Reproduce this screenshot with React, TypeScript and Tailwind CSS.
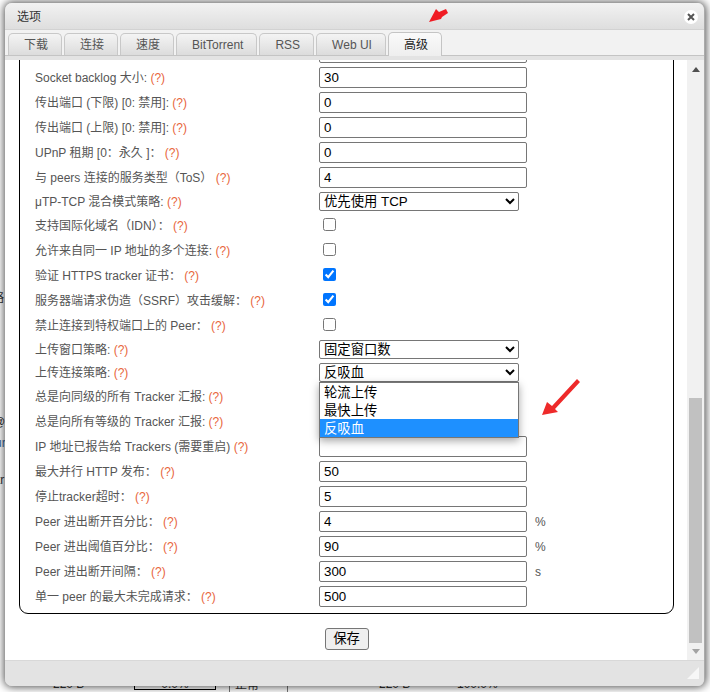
import React from "react";

const font = { fontFamily: '"Liberation Sans", "Noto Sans CJK SC", sans-serif' };

const tabs = ["下载", "连接", "速度", "BitTorrent", "RSS", "Web UI", "高级"];

type Row = {
  label: string;
  kind: "input" | "select" | "check" | "open";
  value?: string;
  unit?: string;
  checked?: boolean;
  options?: string[];
};

const rows: Row[] = [
  { label: "", kind: "input", value: "" },
  { label: "Socket backlog 大小:", kind: "input", value: "30" },
  { label: "传出端口 (下限) [0: 禁用]:", kind: "input", value: "0" },
  { label: "传出端口 (上限) [0: 禁用]:", kind: "input", value: "0" },
  { label: "UPnP 租期 [0：永久 ]：", kind: "input", value: "0" },
  { label: "与 peers 连接的服务类型（ToS）", kind: "input", value: "4" },
  { label: "μTP-TCP 混合模式策略:", kind: "select", options: ["优先使用 TCP"] },
  { label: "支持国际化域名（IDN）：", kind: "check" },
  { label: "允许来自同一 IP 地址的多个连接:", kind: "check" },
  { label: "验证 HTTPS tracker 证书：", kind: "check", checked: true },
  { label: "服务器端请求伪造（SSRF）攻击缓解：", kind: "check", checked: true },
  { label: "禁止连接到特权端口上的 Peer：", kind: "check" },
  { label: "上传窗口策略:", kind: "select", options: ["固定窗口数"] },
  { label: "上传连接策略:", kind: "open", options: ["反吸血"] },
  { label: "总是向同级的所有 Tracker 汇报:", kind: "check" },
  { label: "总是向所有等级的 Tracker 汇报:", kind: "check" },
  { label: "IP 地址已报告给 Trackers (需要重启)", kind: "input", value: "" },
  { label: "最大并行 HTTP 发布：", kind: "input", value: "50" },
  { label: "停止tracker超时：", kind: "input", value: "5" },
  { label: "Peer 进出断开百分比：", kind: "input", value: "4", unit: "%" },
  { label: "Peer 进出阈值百分比：", kind: "input", value: "90", unit: "%" },
  { label: "Peer 进出断开间隔：", kind: "input", value: "300", unit: "s" },
  { label: "单一 peer 的最大未完成请求：", kind: "input", value: "500" },
];

function Field({ row }: { row: Row }) {
  if (row.kind === "check") {
    return <input type="checkbox" defaultChecked={row.checked} className="mb-[2px] ml-[4px] h-[13px] w-[13px]" />;
  }
  if (row.kind === "input") {
    return (
      <>
        <input
          readOnly
          value={row.value}
          className="h-[21px] w-[208px] rounded-[2px] border border-[#767676] bg-white px-[4px] text-[13.33px] text-black"
        />
        {row.unit && <span className="ml-2 text-xs text-[#555]">{row.unit}</span>}
      </>
    );
  }
  return (
    <div className="relative">
      <select className="h-[19px] w-[200px] rounded-[2px] border border-[#767676] bg-white text-[13.33px] text-black">
        {row.options?.map((o) => (
          <option key={o}>{o}</option>
        ))}
      </select>
      {row.kind === "open" && (
        <div className="absolute left-0 top-[19px] z-10 w-[200px] border border-[#767676] bg-white text-[13.33px] text-black shadow-[0_3px_8px_rgba(0,0,0,0.35)]">
          <div className="h-[18px] pl-1 leading-[20px]">轮流上传</div>
          <div className="h-[18px] pl-1 leading-[20px]">最快上传</div>
          <div className="h-[18px] bg-[#1e90ff] pl-1 leading-[20px] text-white">反吸血</div>
        </div>
      )}
    </div>
  );
}

export default function App() {
  return (
    <div style={font} className="relative h-[692px] w-[710px] overflow-hidden bg-white pl-[5px] pt-[3px]">
      {/* page behind the dialog */}
      <div className="absolute inset-0 text-xs text-[#333]">
        <span className="absolute left-[-8px] top-[290px]">略</span>
        <span className="absolute left-[-7px] top-[414px]">@</span>
        <span className="absolute left-[-5px] top-[435px] text-[#3b6ea5]">ur</span>
        <span className="absolute left-[-3px] top-[472px]">tr</span>
        <div className="absolute bottom-[2px] left-[134px] flex h-[20px] w-[82px] items-end justify-center border border-black leading-[10px]">0.0%</div>
        <div className="absolute bottom-0 left-[229px] flex h-[20px] w-[59px] items-end border-x border-[#777] pl-[5px] leading-[14px]">正常</div>
        <span className="absolute bottom-[1px] left-[53px] leading-[14px]">220 B</span>
        <span className="absolute bottom-[1px] left-[379px] leading-[14px]">220 B</span>
        <span className="absolute bottom-[1px] left-[457px] leading-[14px]">100.0%</span>
      </div>

      {/* dialog */}
      <div className="relative flex h-[683px] w-[700px] flex-col overflow-hidden rounded-[7px] border-r border-[#aaa] bg-[#e3e3e3] shadow-[0_0_8px_1px_rgba(0,0,0,0.7)]">
        <div className="flex h-[27px] shrink-0 items-center justify-between border-b border-[#d2d2d2] bg-gradient-to-b from-[#f2f2f2] to-[#dedede] pl-[12px] pr-[6px] pt-[1px] text-xs text-[#333]">
          <span>选项</span>
          <span className="flex h-[14px] w-[14px] items-center justify-center rounded-full bg-white">
            <svg width="8" height="8" viewBox="0 0 8 8">
              <path d="M1 1L7 7M7 1L1 7" stroke="#555" strokeWidth="2" />
            </svg>
          </span>
        </div>

        <div className="flex h-[26px] shrink-0 items-end gap-[2px] border-b border-[#c4c4c4] bg-[#f2f2f2] pl-[3px]">
          {tabs.map((t) =>
            t === "高级" ? (
              <div
                key={t}
                className="relative top-[1px] flex h-[24px] items-center rounded-t-[5px] border border-b-0 border-[#c4c4c4] bg-gradient-to-b from-[#fafafa] to-[#eeeeee] pl-[15px] pr-[13px] pt-[1px] text-xs text-[#222]"
              >
                {t}
              </div>
            ) : (
              <div
                key={t}
                className="flex h-[22px] items-center rounded-t-[5px] border border-b-0 border-[#c8c8c8] bg-gradient-to-b from-[#f4f4f4] to-[#dcdcdc] pl-[15px] pr-[13px] pt-[1px] text-xs text-[#555]"
              >
                {t}
              </div>
            )
          )}
        </div>

        <div className="h-[4px] shrink-0 bg-[#e3e3e3]" />

        <div className="flex h-[600px] shrink-0 overflow-hidden bg-white">
          <div className="w-[683px]">
            <div className="ml-[14px] mt-[-21px] w-[655px] rounded-b-[9px] border border-black pb-[4px]">
              {rows.map((row, i) => (
                <div
                  key={i}
                  className={`flex items-center pl-[15px] text-xs text-[#555] ${
                    row.kind === "select" || row.kind === "open" ? "h-[23px]" : "h-[25px]"
                  }`}
                >
                  <span className="w-[284px] shrink-0 whitespace-nowrap">
                    {row.label}
                    {row.label && <span className="text-[#e8663c]"> (?)</span>}
                  </span>
                  <Field row={row} />
                </div>
              ))}
            </div>
            <div className="mt-[14px] flex justify-center pl-[1px]">
              <button className="h-[22px] w-[44px] rounded-[3px] border border-[#767676] bg-[#efefef] text-[13.33px] text-black">
                保存
              </button>
            </div>
          </div>

          {/* scrollbar */}
          <div className="flex w-[17px] shrink-0 flex-col items-center bg-[#f1f1f1]">
            <svg width="8" height="5" viewBox="0 0 8 5" className="mt-[7px]">
              <path d="M4 0L8 5H0Z" fill="#505050" />
            </svg>
            <div className="mt-[326px] h-[245px] w-[13px] bg-[#c1c1c1]" />
            <svg width="8" height="5" viewBox="0 0 8 5" className="mt-[6px]">
              <path d="M0 0H8L4 5Z" fill="#a3a3a3" />
            </svg>
          </div>
        </div>

        <div className="flex flex-1 items-end justify-end border-t border-[#d8d8d8] bg-[#e3e3e3] pb-[7px] pr-[5px]">
          <svg width="12" height="12" viewBox="0 0 12 12">
            <path d="M12 0V12H0Z" fill="#f7f7f7" />
          </svg>
        </div>
      </div>

      {/* red arrows drawn over the shot */}
      <svg className="absolute left-0 top-0" width="710" height="692" viewBox="0 0 710 692">
        <polygon points="429,22 436,9 439,12 446,9 448,13 442,17 441,19" fill="#f01c24" />
        <polygon points="542,415 547,402 552,406 577,379 580,382 555,409 558,412" fill="#ee2a2a" />
      </svg>
    </div>
  );
}
